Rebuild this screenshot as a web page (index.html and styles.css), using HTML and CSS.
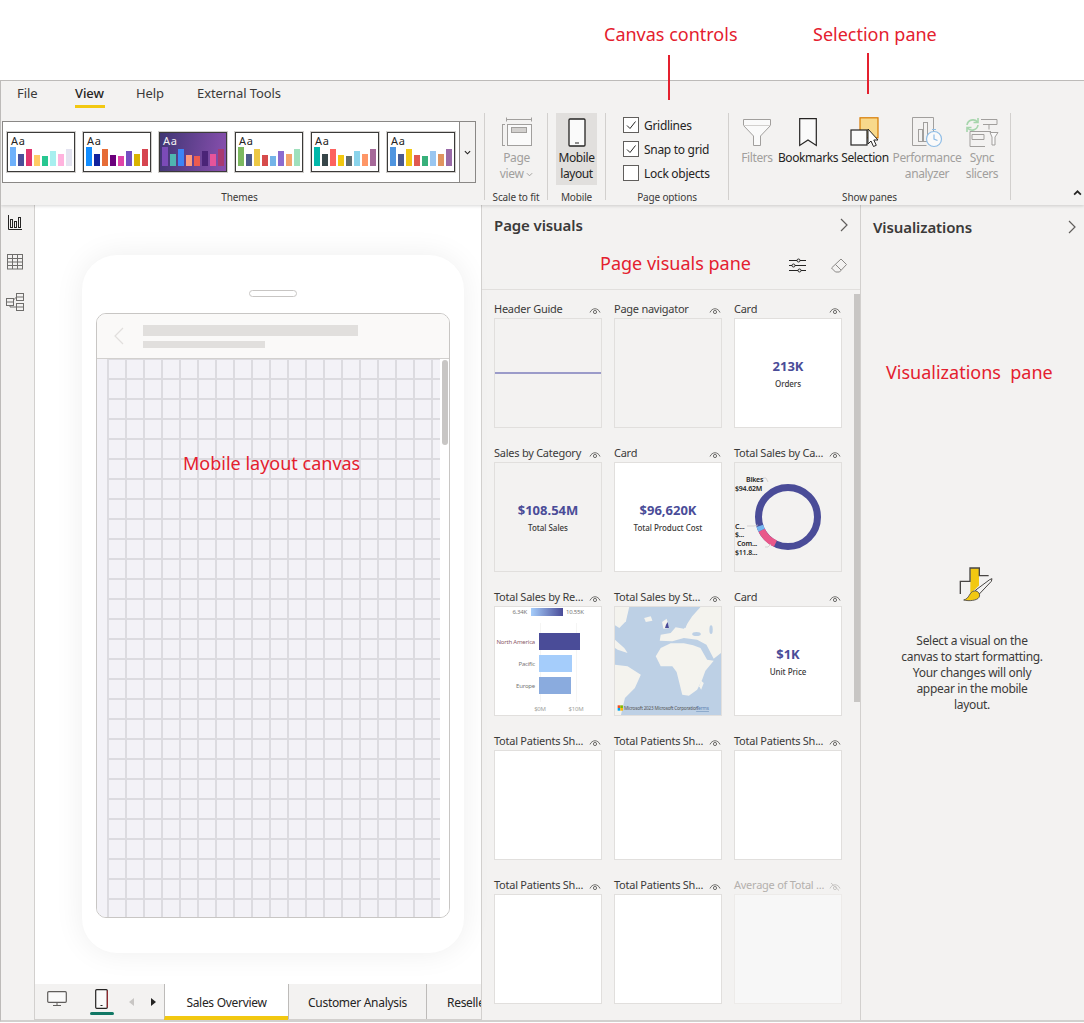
FILE: index.html
```html
<!DOCTYPE html>
<html lang="en">
<head>
<meta charset="utf-8">
<title>Mobile layout view</title>
<link rel="stylesheet" href="styles.css">
</head>
<body>
<svg class="defs" width="0" height="0" aria-hidden="true">
  <symbol id="eye" viewBox="0 0 12 9">
    <path d="M1 6.5C3 1.5 9 1.5 11 6.5" fill="none" stroke="#6f6e6c" stroke-width="1"/>
    <circle cx="6" cy="6" r="1.6" fill="none" stroke="#6f6e6c" stroke-width="1"/>
  </symbol>
  <symbol id="eye-off" viewBox="0 0 12 9">
    <path d="M1 6.5C3 1.5 9 1.5 11 6.5" fill="none" stroke="#c8c6c4" stroke-width="1"/>
    <circle cx="6" cy="6" r="1.6" fill="none" stroke="#c8c6c4" stroke-width="1"/>
    <path d="M2 1L10 8.5" stroke="#c8c6c4" stroke-width="1"/>
  </symbol>
</svg>
<div class="page">
  <div class="annotation note-canvas">Canvas controls</div>
  <div class="annotation note-selection">Selection pane</div>
  <div class="pointer pointer-canvas"></div>
  <div class="pointer pointer-selection"></div>
  <div class="annotation note-mobile">Mobile layout canvas</div>
  <div class="annotation note-visuals">Page visuals pane</div>
  <div class="annotation note-viz">Visualizations&nbsp; pane</div>

  <div class="window">
    <header class="ribbon">
      <nav class="tabs">
        <span class="tab">File</span>
        <span class="tab tab-active"><span class="tab-label">View</span></span>
        <span class="tab">Help</span>
        <span class="tab">External Tools</span>
      </nav>
      <div class="ribbon-body">
        <section class="group group-themes">
          <div class="group-content">
            <div class="gallery">
              <div class="swatches">
                <div class="swatch"><span class="aa">Aa</span><svg class="bars" viewBox="0 0 62 19" width="62" height="19"><rect x="0" y="0" width="6" height="19" fill="#6fb1fb"/><rect x="8" y="7" width="6" height="12" fill="#4a4f9a"/><rect x="16" y="2" width="6" height="17" fill="#e0356e"/><rect x="24" y="8" width="6" height="11" fill="#ffcc66"/><rect x="32" y="9" width="6" height="10" fill="#28c791"/><rect x="40" y="4" width="6" height="15" fill="#a8efef"/><rect x="48" y="7" width="6" height="12" fill="#ffb3de"/><rect x="56" y="2" width="6" height="17" fill="#e3e3f0"/></svg></div>
                <div class="swatch"><span class="aa">Aa</span><svg class="bars" viewBox="0 0 62 19" width="62" height="19"><rect x="0" y="0" width="6" height="19" fill="#118dff"/><rect x="8" y="7" width="6" height="12" fill="#12239e"/><rect x="16" y="2" width="6" height="17" fill="#e66c37"/><rect x="24" y="8" width="6" height="11" fill="#6b007b"/><rect x="32" y="9" width="6" height="10" fill="#e044a7"/><rect x="40" y="4" width="6" height="15" fill="#744ec2"/><rect x="48" y="7" width="6" height="12" fill="#d9b300"/><rect x="56" y="2" width="6" height="17" fill="#d64550"/></svg></div>
                <div class="swatch swatch-dark"><span class="aa">Aa</span><svg class="bars" viewBox="0 0 62 19" width="62" height="19"><rect x="0" y="0" width="6" height="19" fill="#7b4bb8"/><rect x="8" y="7" width="6" height="12" fill="#4fb5b0"/><rect x="16" y="2" width="6" height="17" fill="#3d84f5"/><rect x="24" y="8" width="6" height="11" fill="#ff9a7a"/><rect x="32" y="9" width="6" height="10" fill="#ee5a4f"/><rect x="40" y="4" width="6" height="15" fill="#4a2477"/><rect x="48" y="7" width="6" height="12" fill="#e7549a"/><rect x="56" y="2" width="6" height="17" fill="#a83a70"/></svg></div>
                <div class="swatch"><span class="aa">Aa</span><svg class="bars" viewBox="0 0 62 19" width="62" height="19"><rect x="0" y="0" width="6" height="19" fill="#7cb860"/><rect x="8" y="7" width="6" height="12" fill="#4d5a8c"/><rect x="16" y="2" width="6" height="17" fill="#ecc846"/><rect x="24" y="8" width="6" height="11" fill="#d64b4b"/><rect x="32" y="9" width="6" height="10" fill="#74b4e8"/><rect x="40" y="4" width="6" height="15" fill="#8b6bd0"/><rect x="48" y="7" width="6" height="12" fill="#f3a36b"/><rect x="56" y="2" width="6" height="17" fill="#9fe0bc"/></svg></div>
                <div class="swatch"><span class="aa">Aa</span><svg class="bars" viewBox="0 0 62 19" width="62" height="19"><rect x="0" y="0" width="6" height="19" fill="#01b8aa"/><rect x="8" y="7" width="6" height="12" fill="#374649"/><rect x="16" y="2" width="6" height="17" fill="#fd625e"/><rect x="24" y="8" width="6" height="11" fill="#f2c80f"/><rect x="32" y="9" width="6" height="10" fill="#5f6b6d"/><rect x="40" y="4" width="6" height="15" fill="#8ad4eb"/><rect x="48" y="7" width="6" height="12" fill="#fe9666"/><rect x="56" y="2" width="6" height="17" fill="#a66999"/></svg></div>
                <div class="swatch"><span class="aa">Aa</span><svg class="bars" viewBox="0 0 62 19" width="62" height="19"><rect x="0" y="0" width="6" height="19" fill="#4f95e0"/><rect x="8" y="7" width="6" height="12" fill="#4a5a8f"/><rect x="16" y="2" width="6" height="17" fill="#f2c811"/><rect x="24" y="8" width="6" height="11" fill="#e05a50"/><rect x="32" y="9" width="6" height="10" fill="#37b07a"/><rect x="40" y="4" width="6" height="15" fill="#9ac6f0"/><rect x="48" y="7" width="6" height="12" fill="#e09460"/><rect x="56" y="2" width="6" height="17" fill="#9a6aa8"/></svg></div>
              </div>
              <div class="gallery-more"><svg viewBox="0 0 8 5" width="7" height="5"><path d="M1 1l3 3 3-3" fill="none" stroke="#252423" stroke-width="1.3"/></svg></div>
            </div>
          </div>
          <div class="group-label">Themes</div>
        </section>

        <section class="group group-scale">
          <div class="group-content rbtn-row">
            <div class="rbtn rbtn-off rbtn-page">
              <svg class="ricon" width="30" height="31" viewBox="0 0 30 31"><g fill="none" stroke="#a19f9d"><path d="M4.500 2.500H29.500M4.500.5v4M29.500.5v4M.5 7v22M-1 7.500h4M-1 28.500h4"/><rect x="5.500" y="7.500" width="24" height="21" fill="#fafafa"/><rect x="9.500" y="10.500" width="15" height="5" fill="#d2d0ce"/></g></svg>
              <span>Page</span>
              <span>view <svg class="caret" viewBox="0 0 8 5" width="7" height="5"><path d="M1 1l3 3 3-3" fill="none" stroke="#a19f9d" stroke-width="1.1"/></svg></span>
            </div>
          </div>
          <div class="group-label">Scale to fit</div>
        </section>

        <section class="group group-mobile">
          <div class="group-content">
            <div class="rbtn rbtn-on">
              <svg class="ricon" width="18" height="29" viewBox="0 0 18 29"><rect x="1" y="1" width="16" height="27" rx="1" fill="#fafafa" stroke="#252423" stroke-width="1.3"/><path d="M7 25h4" stroke="#252423"/></svg>
              <span>Mobile</span>
              <span>layout</span>
            </div>
          </div>
          <div class="group-label">Mobile</div>
        </section>

        <section class="group group-options">
          <div class="group-content">
            <label class="check"><span class="box"><svg viewBox="0 0 14 14" width="14" height="14"><path d="M3 7.500l3 3 5.500-7" fill="none" stroke="#252423"/></svg></span>Gridlines</label>
            <label class="check"><span class="box"><svg viewBox="0 0 14 14" width="14" height="14"><path d="M3 7.500l3 3 5.500-7" fill="none" stroke="#252423"/></svg></span>Snap to grid</label>
            <label class="check"><span class="box"></span>Lock objects</label>
          </div>
          <div class="group-label">Page options</div>
        </section>

        <section class="group group-panes">
          <div class="group-content rbtn-row">
            <div class="rbtn rbtn-off rbtn-filters">
              <svg class="ricon" width="30" height="29" viewBox="0 0 30 29"><path d="M1.500 1.500h27v6L18.500 18v9.500h-7V18L1.500 7.500z" fill="#fafafa" stroke="#a19f9d"/><path d="M1.500 7.500h27" stroke="#d2d0ce"/></svg>
              <span>Filters</span>
            </div>
            <div class="rbtn rbtn-bookmarks">
              <svg class="ricon" width="18" height="29" viewBox="0 0 18 29"><path d="M.7.7h16.600v26.800L9 22 .7 27.500z" fill="#fafafa" stroke="#252423" stroke-width="1.200"/></svg>
              <span>Bookmarks</span>
            </div>
            <div class="rbtn rbtn-selection">
              <svg class="ricon" width="31" height="31" viewBox="0 0 31 31"><rect x="10" y=".8" width="18" height="20" fill="#f8d98b" stroke="#d87a00" stroke-width="1.200"/><rect x="1" y="13" width="16" height="15" fill="#fafafa" stroke="#252423" stroke-width="1.200"/><path d="M18 12v15l3-3 2.500 5.500 2.800-1.200-2.500-5.300h4.200z" fill="#fff" stroke="#252423"/></svg>
              <span>Selection</span>
            </div>
            <div class="rbtn rbtn-off rbtn-perf">
              <svg class="ricon" width="31" height="31" viewBox="0 0 31 31"><g fill="none" stroke="#a19f9d"><path d="M21.500 16V.5H.5v28h14"/><rect x="6.500" y="12.500" width="4" height="12"/><rect x="11.500" y="5.500" width="4" height="19"/></g><g fill="#fafafa" stroke="#8fbde6" stroke-width="1.200"><circle cx="22" cy="22" r="7.500"/><path d="M22 17.500V22l3.500 1.500M20 12.500h4" fill="none"/></g></svg>
              <span>Performance</span>
              <span>analyzer</span>
            </div>
            <div class="rbtn rbtn-off rbtn-sync">
              <svg class="ricon" width="34" height="31" viewBox="0 0 34 31"><g fill="none" stroke="#a19f9d"><path d="M16 2.500h16v5H18M24 7.500v5M5 14.500h21M5 14.500v15h15M7 17.500h12v5H7z"/></g><path d="M25 15.500h8l-3 4.500v8h-3v-8z" fill="#fafafa" stroke="#a19f9d"/><g fill="none" stroke="#a6d5ac" stroke-width="1.600"><path d="M2 8a6 6 0 0 1 10.500-3M13 8a6 6 0 0 1-10.500 3"/><path d="M13 1v4.500H8.500M2 15v-4.500h4.500"/></g></svg>
              <span>Sync</span>
              <span>slicers</span>
            </div>
          </div>
          <div class="group-label">Show panes</div>
        </section>
      </div>
      <svg class="collapse" viewBox="0 0 8 5" width="9" height="6"><path d="M1 4l3-3 3 3" fill="none" stroke="#252423" stroke-width="1.500"/></svg>
    </header>

    <main class="main">
      <aside class="rail">
        <svg width="14" height="16" viewBox="0 0 14 16"><g fill="none" stroke="#252423"><path d="M.5 0v14.500H14"/><rect x="2.500" y="4.500" width="2" height="8"/><rect x="6.500" y="6.500" width="2" height="6"/><rect x="10.500" y="2.500" width="2" height="10"/></g></svg>
        <svg width="16" height="16" viewBox="0 0 16 16"><g fill="none" stroke="#6f6e6c"><rect x=".5" y=".5" width="15" height="14.500"/><path d="M.5 4.500h15M.5 8h15M.5 11.500h15M5.500.5V15M10.500.5V15"/></g></svg>
        <svg width="18" height="18" viewBox="0 0 18 18"><g fill="none" stroke="#6f6e6c"><rect x="10.500" y=".5" width="7" height="7"/><path d="M10.500 4h7"/><rect x=".5" y="5.500" width="7" height="7"/><path d="M.5 9h7"/><rect x="10.500" y="10.500" width="7" height="7"/><path d="M10.500 14h7M7.500 7L10.500 4M4 12.500V14h6.500"/></g></svg>
      </aside>

      <div class="canvas-col">
        <div class="canvas">
          <div class="phone">
            <div class="speaker"></div>
            <div class="screen">
              <div class="screen-head">
                <svg class="back" width="10" height="18" viewBox="0 0 10 18"><path d="M9 1L1 9l8 8" fill="none" stroke="#e1dfdd" stroke-width="1.200"/></svg>
                <div class="head-bars"><div class="bar-title"></div><div class="bar-sub"></div></div>
              </div>
              <div class="screen-body">
                <div class="grid-strip"></div>
                <div class="grid-area"></div>
                <div class="screen-track"><div class="screen-thumb"></div></div>
              </div>
            </div>
          </div>
        </div>
        <footer class="tabbar">
          <div class="view-switch">
            <svg class="ico-desktop" width="20" height="15" viewBox="0 0 20 15"><rect x=".7" y=".7" width="18.600" height="10.600" rx="1" fill="#fafafa" stroke="#605e5c" stroke-width="1.200"/><path d="M10 11.500v3M6 14.500h8" stroke="#605e5c"/></svg>
            <div class="ico-phone-wrap">
              <svg width="13" height="20" viewBox="0 0 13 20"><rect x=".7" y=".7" width="11.600" height="18.600" rx="1" fill="#fafafa" stroke="#252423" stroke-width="1.200"/><path d="M12.300 1.500v17" stroke="#a4262c"/><path d="M5.500 16.500h2" stroke="#252423"/></svg>
              <div class="phone-underline"></div>
            </div>
            <span class="arrow arrow-prev"></span>
            <span class="arrow arrow-next"></span>
          </div>
          <div class="page-tab page-tab-active">Sales Overview</div>
          <div class="page-tab page-tab-customer">Customer Analysis</div>
          <div class="page-tab page-tab-cut">Reseller Analysis</div>
        </footer>
      </div>

      <section class="pane visuals">
        <div class="pane-head">
          <div class="pane-title-row visuals-title-row">
            <h2 class="pane-title">Page visuals</h2>
            <svg class="pane-chevron" width="8" height="14" viewBox="0 0 8 14"><path d="M1 1l6 6-6 6" fill="none" stroke="#605e5c" stroke-width="1.200"/></svg>
          </div>
          <div class="pane-tools">
            <svg width="17" height="15" viewBox="0 0 17 15"><g fill="none" stroke="#252423"><path d="M0 2.500h8M11 2.500h6M0 7.500h3M6 7.500h11M0 12.500h9M12 12.500h5"/><circle cx="9.500" cy="2.500" r="1.500"/><circle cx="4.500" cy="7.500" r="1.500"/><circle cx="10.500" cy="12.500" r="1.500"/></g></svg>
            <svg width="16" height="15" viewBox="0 0 16 15"><g fill="#f3f2f1" stroke="#8a8886"><path d="M10 1l5.500 5.500-7 7.500H4.500L.5 10z"/><path d="M4.500 6.500l5.500 5.500" fill="none"/></g></svg>
          </div>
        </div>
        <div class="pane-body">
          <div class="visual-grid">
            <article class="visual">
              <div class="visual-title"><span>Header Guide</span><svg class="eye" width="12" height="9"><use href="#eye"/></svg></div>
              <div class="thumb"><div class="guide-line"></div></div>
            </article>
            <article class="visual">
              <div class="visual-title"><span>Page navigator</span><svg class="eye" width="12" height="9"><use href="#eye"/></svg></div>
              <div class="thumb"></div>
            </article>
            <article class="visual">
              <div class="visual-title"><span>Card</span><svg class="eye" width="12" height="9"><use href="#eye"/></svg></div>
              <div class="thumb thumb-white card"><strong>213K</strong><small>Orders</small></div>
            </article>

            <article class="visual">
              <div class="visual-title"><span>Sales by Category</span><svg class="eye" width="12" height="9"><use href="#eye"/></svg></div>
              <div class="thumb card"><strong>$108.54M</strong><small>Total Sales</small></div>
            </article>
            <article class="visual">
              <div class="visual-title"><span>Card</span><svg class="eye" width="12" height="9"><use href="#eye"/></svg></div>
              <div class="thumb thumb-white card"><strong>$96,620K</strong><small>Total Product Cost</small></div>
            </article>
            <article class="visual">
              <div class="visual-title"><span>Total Sales by Ca...</span><svg class="eye" width="12" height="9"><use href="#eye"/></svg></div>
              <div class="thumb">
                <svg class="chart" viewBox="0 0 106 108" width="106" height="108">
                  <circle cx="53" cy="54" r="29.500" fill="none" stroke="#4a4c98" stroke-width="7"/>
                  <g transform="rotate(-90 53 54)" fill="none" stroke-width="7">
                    <circle cx="53" cy="54" r="29.500" stroke="#e9588a" stroke-dasharray="19.600 166" stroke-dashoffset="-105.500"/>
                    <circle cx="53" cy="54" r="29.500" stroke="#75b6f0" stroke-dasharray="4.600 181" stroke-dashoffset="-125.100"/>
                  </g>
                  <path d="M28 15h3l2 4M12 63h7l4-1M30 84h3l3-3" fill="none" stroke="#c8c6c4" stroke-width=".7"/>
                  <g class="chart-label">
                    <text x="11" y="19">Bikes</text>
                    <text x="0" y="28">$94.62M</text>
                    <text x="0" y="66">C...</text>
                    <text x="0" y="74">$...</text>
                    <text x="2" y="83">Com...</text>
                    <text x="0" y="92">$11.8...</text>
                  </g>
                </svg>
              </div>
            </article>

            <article class="visual">
              <div class="visual-title"><span>Total Sales by Re...</span><svg class="eye" width="12" height="9"><use href="#eye"/></svg></div>
              <div class="thumb thumb-white">
                <svg class="chart" viewBox="0 0 106 108" width="106" height="108">
                  <defs><linearGradient id="legend"><stop offset="0" stop-color="#a5cdfb"/><stop offset="1" stop-color="#4a4c98"/></linearGradient></defs>
                  <rect x="36" y="1" width="32" height="8" fill="url(#legend)"/>
                  <path d="M45.500 16V95M81.500 16V95" stroke="#f3f2f1" stroke-width=".8"/>
                  <rect x="44" y="26" width="41" height="17" fill="#4a4c98"/>
                  <rect x="44" y="48" width="33" height="17" fill="#a5cdfb"/>
                  <rect x="44" y="70" width="32" height="17" fill="#8aabde"/>
                  <g class="axis-label">
                    <text x="32" y="7" text-anchor="end">6.34K</text>
                    <text x="71" y="7">10.55K</text>
                    <text x="40" y="37" text-anchor="end" class="axis-red">North America</text>
                    <text x="40" y="59" text-anchor="end">Pacific</text>
                    <text x="40" y="81" text-anchor="end">Europe</text>
                    <text x="45" y="104" text-anchor="middle" class="axis-muted">$0M</text>
                    <text x="81" y="104" text-anchor="middle" class="axis-muted">$10M</text>
                  </g>
                </svg>
              </div>
            </article>
            <article class="visual">
              <div class="visual-title"><span>Total Sales by St...</span><svg class="eye" width="12" height="9"><use href="#eye"/></svg></div>
              <div class="thumb">
                <svg class="chart map" viewBox="392 67 320 324" width="106" height="108" preserveAspectRatio="none">
                  <rect x="392" y="67" width="320" height="324" fill="#bdd0e5"/>
                  <g fill="#f4f3ee">
                    <path d="M515 215L530 190L560 176L600 176L628 182L650 190L670 225L690 228L665 258L655 285L640 315L615 333L595 330L585 290L578 262L565 245L530 245Z"/>
                    <path d="M392 240L430 245L470 270L452 310L422 340L410 391H392Z"/>
                    <path d="M527 168L530 150L560 145L575 128L600 132L625 95L650 67H712V205L690 222L668 180L640 165L600 160L565 170Z"/>
                    <path d="M392 67H435L425 110L405 130L392 122Z"/>
                    <path d="M480 100L500 95L505 108L485 112Z"/>
                    <path d="M534 112L548 102L556 130L538 132Z"/>
                    <path d="M652 288L660 295L652 315L646 305Z"/>
                    <path d="M392 165L420 190L430 205L400 195L392 190Z"/>
                  </g>
                  <g fill="#bdd0e5">
                    <path d="M590 125L600 105L612 110L605 130Z"/>
                    <ellipse cx="638" cy="148" rx="13" ry="6"/>
                    <ellipse cx="682" cy="135" rx="5" ry="13"/>
                  </g>
                  <path d="M546 120L551 112L555 130H543Z" fill="#4a4c98"/>
                  <rect x="400" y="362" width="8" height="8" fill="#f25022"/><rect x="408" y="362" width="8" height="8" fill="#7fba00"/><rect x="400" y="370" width="8" height="8" fill="#00a4ef"/><rect x="408" y="370" width="8" height="8" fill="#ffb900"/>
                  <text x="419" y="376" class="map-text">Microsoft 2023 Microsoft Corporation</text>
                  <text x="637" y="377" class="map-link">Terms</text>
                </svg>
              </div>
            </article>
            <article class="visual">
              <div class="visual-title"><span>Card</span><svg class="eye" width="12" height="9"><use href="#eye"/></svg></div>
              <div class="thumb thumb-white card"><strong>$1K</strong><small>Unit Price</small></div>
            </article>

            <article class="visual">
              <div class="visual-title"><span>Total Patients Sh...</span><svg class="eye" width="12" height="9"><use href="#eye"/></svg></div>
              <div class="thumb thumb-white"></div>
            </article>
            <article class="visual">
              <div class="visual-title"><span>Total Patients Sh...</span><svg class="eye" width="12" height="9"><use href="#eye"/></svg></div>
              <div class="thumb thumb-white"></div>
            </article>
            <article class="visual">
              <div class="visual-title"><span>Total Patients Sh...</span><svg class="eye" width="12" height="9"><use href="#eye"/></svg></div>
              <div class="thumb thumb-white"></div>
            </article>

            <article class="visual">
              <div class="visual-title"><span>Total Patients Sh...</span><svg class="eye" width="12" height="9"><use href="#eye"/></svg></div>
              <div class="thumb thumb-white"></div>
            </article>
            <article class="visual">
              <div class="visual-title"><span>Total Patients Sh...</span><svg class="eye" width="12" height="9"><use href="#eye"/></svg></div>
              <div class="thumb thumb-white"></div>
            </article>
            <article class="visual visual-hidden">
              <div class="visual-title"><span>Average of Total ...</span><svg class="eye" width="12" height="9"><use href="#eye-off"/></svg></div>
              <div class="thumb thumb-faded"></div>
            </article>
          </div>
          <div class="pane-scroll"></div>
        </div>
      </section>

      <section class="pane viz">
        <div class="pane-title-row viz-title-row">
          <h2 class="pane-title">Visualizations</h2>
          <svg class="pane-chevron" width="8" height="14" viewBox="0 0 8 14"><path d="M1 1l6 6-6 6" fill="none" stroke="#605e5c" stroke-width="1.200"/></svg>
        </div>
        <div class="viz-empty">
          <svg class="viz-icon" width="34" height="36" viewBox="236 50 102 108">
            <path d="M270 56h26v58l-26 18z" fill="#f2c811"/>
            <path d="M240 134V96h29V56h28v23h28" fill="none" stroke="#484644" stroke-width="4"/>
            <path d="M276 128L322 84H340V98L298 142Z" fill="#f3f2f1"/>
            <path d="M285 123L328 91L335 88L333 96L297 134Z" fill="#f3f2f1" stroke="#484644" stroke-width="3"/>
            <path d="M250 152C268 148 266 128 281 125C292 123 302 134 296 144C290 154 266 156 250 152Z" fill="#f2c811" stroke="#484644" stroke-width="2.500"/>
          </svg>
          <p>Select a visual on the canvas to start formatting. Your changes will only appear in the mobile layout.</p>
        </div>
      </section>
    </main>
  </div>
</div>
</body>
</html>
```

FILE: styles.css
```css
* { box-sizing: border-box; }
html, body { margin: 0; height: 100%; }
body {
  background: #fff;
  color: #252423;
  font-family: "Noto Sans", "Open Sans", sans-serif;
  font-size: 12px;
  overflow: hidden;
}
.defs { position: absolute; }
.page { position: relative; width: 1084px; height: 1023px; padding-top: 80px; }

.annotation {
  position: absolute;
  z-index: 5;
  color: #e4202e;
  font-size: 18px;
  line-height: 24px;
  white-space: nowrap;
}
.note-canvas { left: 604px; top: 22px; }
.note-selection { left: 813px; top: 22px; }
.note-mobile { left: 183px; top: 451px; }
.note-visuals { left: 600px; top: 251px; }
.note-viz { left: 886px; top: 360px; }
.pointer { position: absolute; z-index: 5; width: 2px; background: #e4202e; }
.pointer-canvas { left: 668px; top: 55px; height: 45px; }
.pointer-selection { left: 867px; top: 53px; height: 41px; }

.window {
  height: 942px;
  background: #f3f2f1;
  border-top: 1px solid #bdbbb9;
  border-bottom: 2px solid #d2d0ce;
  border-left: 1px solid #bdbbb9;
  display: flex;
  flex-direction: column;
  overflow: hidden;
}

/* ribbon */
.ribbon {
  position: relative;
  z-index: 2;
  height: 124px;
  flex: none;
  box-shadow: 0 1px 3px rgba(0, 0, 0, .16);
}
.tabs {
  height: 32px;
  display: grid;
  grid-template-columns: 58px 61px 61px auto;
  padding-left: 16px;
  line-height: 24px;
  font-size: 13px;
  letter-spacing: -.1px;
  color: #3b3a39;
}
.tab-active { font-weight: 500; color: #252423; }
.tab-label { display: inline-block; height: 27px; width: 30px; border-bottom: 3px solid #f2c811; }
.ribbon-body { display: flex; height: 87px; }
.group { display: flex; flex-direction: column; border-right: 1px solid #d2d0ce; flex: none; }
.group-content { flex: 1; }
.group-label {
  height: 10px;
  line-height: 14px;
  font-size: 10px;
  letter-spacing: -.15px;
  text-align: center;
  color: #3b3a39;
  white-space: nowrap;
}
.group-themes { width: 484px; padding-left: 1px; padding-right: 7px; }
.group-scale { width: 63px; }
.group-mobile { width: 58px; }
.group-options { width: 123px; }
.group-panes { width: 282px; }
.group-themes .group-content { padding-top: 8px; }

.gallery {
  display: flex;
  height: 62px;
  width: 474px;
  background: #fff;
  border: 1px solid #8a8886;
}
.swatches { flex: 1; display: flex; gap: 8px; padding: 10px 0 0 4px; background: #fff; }
.swatch {
  position: relative;
  width: 68px;
  height: 40px;
  background: #fff;
  border: 1px solid #3b3a39;
  outline: 1px solid #d2d0ce;
  display: flex;
  flex-direction: column;
  padding: 2px 2px 0;
}
.swatch-dark {
  background: linear-gradient(100deg, #3f3573, #8a50b0);
  color: #f3f2f1;
  outline-color: #d2d0ce;
}
.aa { font-size: 11px; line-height: 12px; letter-spacing: .8px; padding-left: 1px; }
.bars { display: block; margin-top: 0; }
.gallery-more {
  width: 16px;
  background: #f3f2f1;
  border-left: 1px solid #8a8886;
  display: flex;
  align-items: center;
  justify-content: center;
}

.rbtn {
  display: flex;
  flex-direction: column;
  align-items: center;
  padding-top: 4px;
  line-height: 16px;
  white-space: nowrap;
  font-size: 12px;
  letter-spacing: -.4px;
  flex: none;
}
.ricon { height: 33px; display: block; padding-bottom: 2px; flex: none; }
.rbtn-off { color: #a19f9d; }
.rbtn-row { display: flex; }
.rbtn-page { width: 63px; }
.caret { vertical-align: 1px; }
.rbtn-on { width: 41px; height: 72px; margin-left: 8px; background: #e1dfdd; }
.group-panes .rbtn-row { padding-left: 9px; }
.rbtn-filters { width: 38px; }
.rbtn-bookmarks { width: 64px; }
.rbtn-selection { width: 50px; }
.rbtn-perf { width: 74px; }
.rbtn-sync { width: 36px; }

.check {
  display: flex;
  align-items: center;
  gap: 5px;
  height: 24px;
  padding-left: 17px;
  white-space: nowrap;
  letter-spacing: -.3px;
}
.box {
  width: 16px;
  height: 16px;
  background: #fff;
  border: 1px solid #605e5c;
  flex: none;
  display: flex;
}

.collapse { position: absolute; right: 2px; top: 109px; }

/* main area */
.main { flex: 1; display: flex; min-height: 0; }
.rail {
  width: 34px;
  flex: none;
  border-right: 1px solid #d2d0ce;
  display: flex;
  flex-direction: column;
  align-items: center;
  padding: 10px 5px 0 0;
  gap: 23px;
}

.canvas-col { width: 446px; flex: none; display: flex; flex-direction: column; }
.canvas { flex: 1; min-height: 0; background: #fff; padding: 50px 0 0 47px; }
.phone {
  width: 382px;
  height: 698px;
  background: #fff;
  border-radius: 35px;
  padding-top: 35px;
  box-shadow: 0 0 30px rgba(0, 0, 0, .07);
}
.speaker {
  width: 48px;
  height: 7px;
  margin: 0 auto;
  border: 1px solid #c8c6c4;
  border-radius: 4px;
}
.screen {
  width: 354px;
  height: 605px;
  margin: 16px 0 0 14px;
  border: 1px solid #c8c6c4;
  border-radius: 10px;
  overflow: hidden;
  display: flex;
  flex-direction: column;
}
.screen-head {
  height: 45px;
  flex: none;
  background: #faf9f8;
  border-bottom: 1px solid #d2d0ce;
  display: flex;
  padding-left: 17px;
}
.back { margin-top: 13px; flex: none; }
.head-bars { margin-left: 19px; padding-top: 11px; }
.bar-title { width: 215px; height: 11px; background: #e1dfdd; }
.bar-sub { width: 122px; height: 7px; margin-top: 5px; background: #e1dfdd; }
.screen-body { flex: 1; display: flex; min-height: 0; }
.grid-strip { width: 10px; flex: none; background: #f3f2f7; }
.grid-area {
  flex: 1;
  background-color: #f3f2f7;
  background-image:
    linear-gradient(to right, #dcdbe0 2px, transparent 2px),
    linear-gradient(to bottom, #dcdbe0 2px, transparent 2px);
  background-size: 18px 20px;
  background-position: 0 19px;
}
.screen-track { width: 9px; flex: none; background: #fff; padding: 1px 1px 0 2px; }
.screen-thumb { height: 85px; background: #c8c6c4; border-radius: 3px; }

.tabbar {
  height: 36px;
  flex: none;
  display: flex;
  background: #f3f2f1;
  border-bottom: 1px solid #d2d0ce;
}
.view-switch { width: 129px; flex: none; display: flex; align-items: flex-start; position: relative; }
.ico-desktop { margin: 7px 0 0 12px; }
.ico-phone-wrap { margin: 5px 0 0 28px; width: 13px; display: flex; flex-direction: column; align-items: center; }
.phone-underline { width: 24px; height: 3px; margin-top: 3px; background: #117865; border-radius: 2px; flex: none; }
.arrow { width: 0; height: 0; border-style: solid; border-width: 4px 0 4px 5px; border-color: transparent; margin-top: 14px; }
.arrow-prev { border-width: 4px 5px 4px 0; border-right-color: #c8c6c4; margin-left: 21px; }
.arrow-next { border-left-color: #252423; margin-left: 17px; }
.page-tab {
  flex: none;
  line-height: 38px;
  text-align: center;
  border-left: 1px solid #bdbbb9;
  letter-spacing: -.3px;
  white-space: nowrap;
  overflow: hidden;
}
.page-tab-active {
  width: 124px;
  background: #fff;
  border-bottom: 4px solid #f2c811;
  height: 36px;
  line-height: 38px;
}
.page-tab-customer { width: 138px; }
.page-tab-cut { width: 55px; text-align: left; padding-left: 20px; }

/* panes */
.pane { flex: none; position: relative; }
.visuals { width: 379px; border-left: 1px solid #d2d0ce; display: flex; flex-direction: column; }
.viz { flex: 1; border-left: 1px solid #d2d0ce; }
.pane-head { height: 85px; flex: none; border-bottom: 1px solid #e1dfdd; }
.pane-title-row {
  display: flex;
  justify-content: space-between;
  align-items: center;
  height: 42px;
  padding: 0 12px 0 12px;
}
.visuals-title-row { height: 40px; }
.pane-title { margin: 0; font-size: 15px; font-weight: 600; letter-spacing: -.1px; color: #3b3a39; }
.pane-tools { display: flex; justify-content: flex-end; gap: 25px; padding-right: 13px; margin-top: 13px; }
.pane-body { flex: 1; min-height: 0; display: flex; justify-content: space-between; }
.visual-grid {
  display: grid;
  grid-template-columns: repeat(3, 108px);
  grid-auto-rows: 138px;
  column-gap: 12px;
  row-gap: 6px;
  padding-left: 12px;
  align-content: start;
}
.visual-title {
  height: 28px;
  display: flex;
  justify-content: space-between;
  align-items: flex-end;
  padding-bottom: 1px;
  line-height: 16px;
  font-size: 11px;
  letter-spacing: -.25px;
  color: #3b3a39;
  white-space: nowrap;
}
.eye { margin: 0 1px 2px 0; flex: none; }
.visual-hidden .visual-title { color: #b3b0ad; }
.thumb { height: 110px; border: 1px solid #e1dfdd; overflow: hidden; }
.thumb-white { background: #fff; }
.thumb-faded { background: #f7f7f7; border-color: #edebe9; }
.guide-line { height: 2px; margin-top: 53px; background: #9b9bc9; }
.card { display: flex; flex-direction: column; align-items: center; justify-content: center; }
.card strong { font-size: 13px; line-height: 18px; font-weight: 700; color: #4a4c98; }
.card small { font-size: 8px; line-height: 13px; margin-top: 2px; font-weight: 500; color: #3b3a39; letter-spacing: -.05px; }
.chart { display: block; }
.chart-label text { font-size: 7px; font-weight: 600; fill: #252423; letter-spacing: -.2px; }
.axis-label text { font-size: 6px; fill: #777; letter-spacing: -.2px; }
.axis-label .axis-red { fill: #8c5a6a; }
.axis-label .axis-muted { fill: #a19f9d; }
.map-text { font-size: 14px; fill: #555; letter-spacing: -.6px; }
.map-link { font-size: 14px; fill: #5a7fb0; text-decoration: underline; letter-spacing: -.3px; }
.pane-scroll { width: 6px; height: 408px; margin-top: 4px; background: #c8c6c4; flex: none; }

.viz-title-row { height: 44px; padding-right: 8px; }
.viz-empty {
  display: flex;
  flex-direction: column;
  align-items: center;
  width: 146px;
  margin: 317px 0 0 38px;
}
.viz-icon { margin-left: 8px; }
.viz-empty p {
  margin: 31px 0 0;
  text-align: center;
  line-height: 16px;
  letter-spacing: -.3px;
  color: #3b3a39;
}
```
